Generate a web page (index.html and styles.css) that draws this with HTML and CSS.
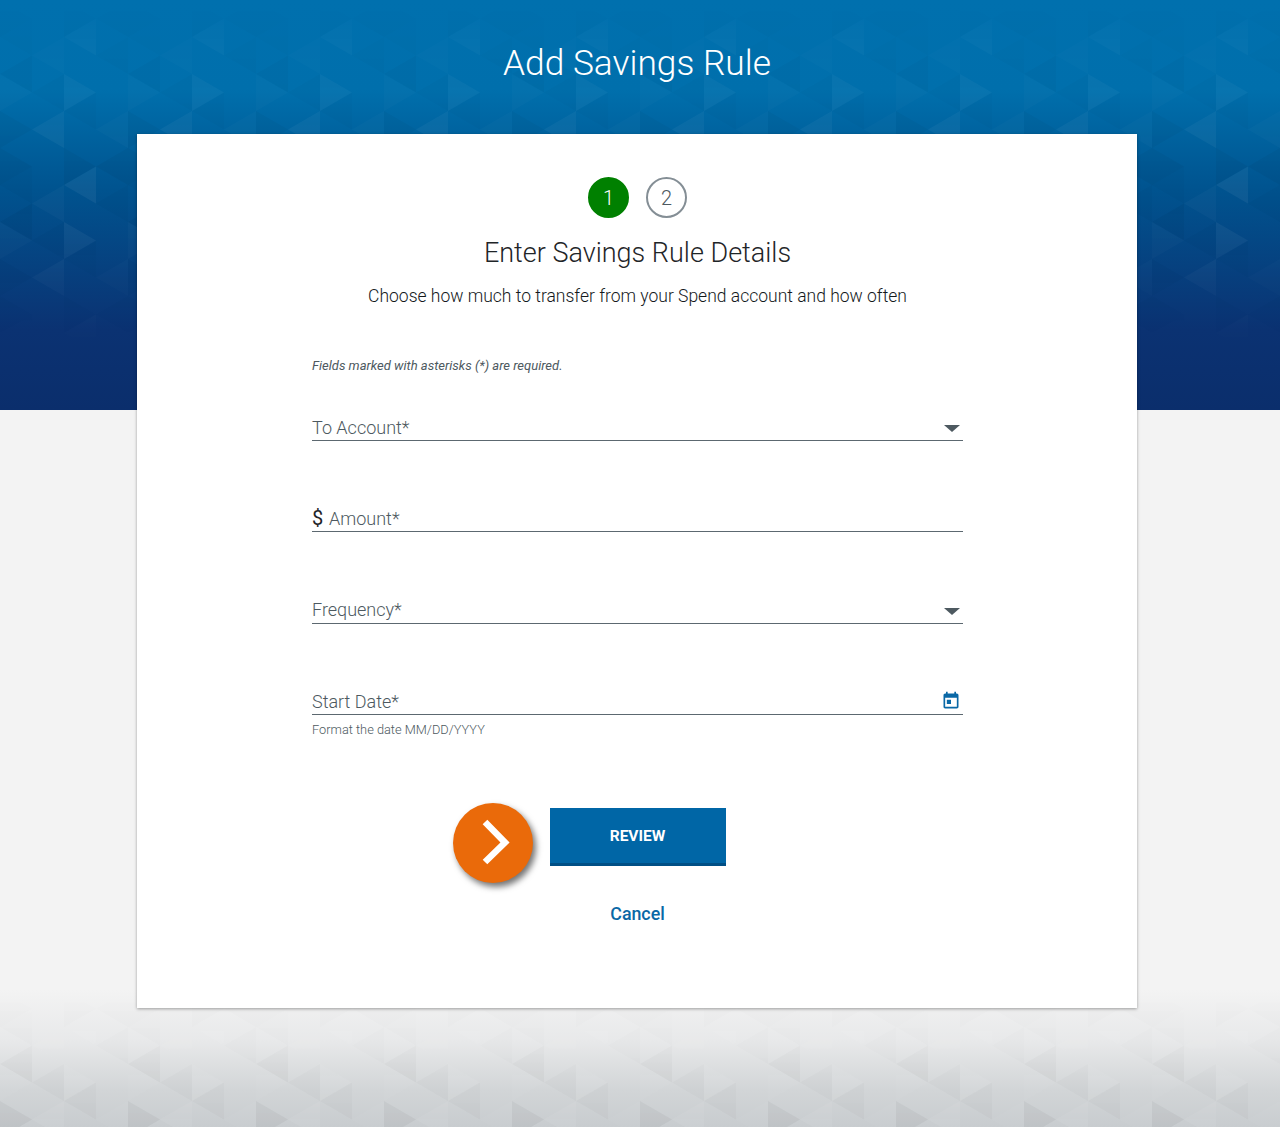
FILE: index.html
```html
<!DOCTYPE html>
<html lang="en">
<head>
  <meta charset="UTF-8">
  <meta name="viewport" content="width=device-width, initial-scale=1.0">
  <title>Add Savings Rule</title>
  <link rel="stylesheet" href="styles.css">
</head>
<body>
  <!-- background bands, the triangle tile is shared by both -->
  <svg class="bg-top" width="100%" height="100%" aria-hidden="true">
    <defs>
      <pattern id="tri" width="128" height="148" patternUnits="userSpaceOnUse">
        <polygon class="dk1" points="0,0 0,37 32,18.5"/>
        <polygon class="dk2" points="32,18.5 32,55.5 0,37"/>
        <polygon class="lt1" points="32,55.5 64,37 64,74"/>
        <polygon class="dk1" points="64,0 64,37 96,18.5"/>
        <polygon class="lt2" points="96,18.5 96,55.5 64,37"/>
        <polygon class="dk2" points="96,55.5 128,37 128,74"/>
        <polygon class="lt1" points="0,74 0,111 32,92.5"/>
        <polygon class="dk1" points="32,55.5 32,92.5 0,74"/>
        <polygon class="dk2" points="32,92.5 64,74 64,111"/>
        <polygon class="lt2" points="64,74 64,111 96,92.5"/>
        <polygon class="dk2" points="96,92.5 96,129.5 64,111"/>
        <polygon class="lt1" points="96,129.5 128,111 128,148"/>
        <polygon class="dk1" points="0,111 0,148 32,129.5"/>
        <polygon class="lt2" points="32,129.5 64,111 64,148"/>
        <polygon class="dk1" points="96,18.5 128,0 128,37"/>
      </pattern>
      <linearGradient id="fadeTopGrad" x1="0" y1="0" x2="0" y2="1">
        <stop offset="0" stop-color="#000"/>
        <stop offset="0.12" stop-color="#777"/>
        <stop offset="0.5" stop-color="#fff"/>
        <stop offset="0.85" stop-color="#000"/>
      </linearGradient>
      <linearGradient id="fadeBottomGrad" x1="0" y1="0" x2="0" y2="1">
        <stop offset="0" stop-color="#000"/>
        <stop offset="0.35" stop-color="#bbb"/>
        <stop offset="1" stop-color="#fff"/>
      </linearGradient>
      <mask id="fadeTop"><rect width="100%" height="100%" fill="url(#fadeTopGrad)"/></mask>
      <mask id="fadeBottom"><rect width="100%" height="100%" fill="url(#fadeBottomGrad)"/></mask>
    </defs>
    <rect class="tri-fill" width="100%" height="100%" fill="url(#tri)" mask="url(#fadeTop)"/>
  </svg>
  <svg class="bg-bottom" width="100%" height="100%" aria-hidden="true">
    <rect class="tri-fill" width="100%" height="100%" fill="url(#tri)" mask="url(#fadeBottom)"/>
  </svg>

  <div class="page">
    <h1 class="page-title">Add Savings Rule</h1>

    <div class="card">
      <div class="steps">
        <span class="step active">1</span>
        <span class="step">2</span>
      </div>
      <h2 class="card-title">Enter Savings Rule Details</h2>
      <p class="card-sub">Choose how much to transfer from your Spend account and how often</p>

      <form class="rule-form">
        <p class="required-note">Fields marked with asterisks (*) are required.</p>

        <div class="field">
          <span class="field-label">To Account*</span>
          <span class="caret"></span>
        </div>

        <div class="field">
          <span class="currency">$</span>
          <span class="field-label">Amount*</span>
        </div>

        <div class="field">
          <span class="field-label">Frequency*</span>
          <span class="caret"></span>
        </div>

        <div class="field">
          <span class="field-label">Start Date*</span>
          <svg class="cal-icon" width="20" height="20" viewBox="0 0 24 24" fill="#0a68a6">
            <path d="M7 10.5h5v5H7zM16 1v2H8V1H6v2H5c-1.11 0-2 .9-2 2v14c0 1.1.89 2 2 2h14c1.1 0 2-.9 2-2V5c0-1.1-.9-2-2-2h-1V1h-2zm3 18H5V8h14v11z"/>
          </svg>
        </div>
        <p class="field-hint">Format the date MM/DD/YYYY</p>

        <div class="actions">
          <button class="btn-review" type="button">
            <span class="go-badge">
              <svg width="80" height="80" viewBox="0 0 80 80" fill="none" stroke="#fff" stroke-width="6.5">
                <polyline points="32,19 52,39.5 32,59"/>
              </svg>
            </span>
            REVIEW
          </button>
          <a class="cancel-link" href="#">Cancel</a>
        </div>
      </form>
    </div>
  </div>
</body>
</html>
```

FILE: styles.css
```css
* {
  box-sizing: border-box;
}

html, body {
  height: 100%;
}

body {
  margin: 0;
  min-height: 1127px;
  position: relative;
  overflow: hidden;
  font-family: 'Roboto', sans-serif;
  font-weight: 400;
  color: #1f2528;
  background: #f3f3f3;
}

.dk1 { fill: #000; fill-opacity: 0.09; }
.dk2 { fill: #000; fill-opacity: 0.05; }
.lt1 { fill: #fff; fill-opacity: 0.06; }
.lt2 { fill: #fff; fill-opacity: 0.12; }

.bg-top, .bg-bottom {
  position: absolute;
  left: 0;
  width: 100%;
}

.bg-top {
  top: 0;
  height: 410px;
  background: linear-gradient(#0070ae 0, #006fac 90px, #00538f 190px, #0b3272 330px, #0b2e6c 410px);
}

.bg-top .tri-fill {
  opacity: 0.45;
}

.bg-bottom {
  bottom: 0;
  height: 137px;
  background: linear-gradient(#f3f3f3 0, #e8e9ea 50px, #d2d5d7 100px, #c8cccf 137px);
}

.bg-bottom .tri-fill {
  opacity: 0.7;
}

.page {
  position: relative;
  padding-left: 137px;
}

.page-title {
  width: 1000px;
  margin: 0;
  height: 134px;
  padding-top: 42px;
  text-align: center;
  font-size: 35.3px;
  line-height: 42px;
  font-weight: 300;
  color: #fff;
}

.card {
  width: 1000px;
  height: 874px;
  padding: 43px 174px 0 175px;
  background: #fff;
  box-shadow: 0 1px 3px rgba(0, 0, 0, 0.35);
}

.steps {
  display: flex;
  justify-content: center;
  gap: 17px;
}

.step {
  width: 41px;
  height: 41px;
  border: 2px solid #848e95;
  border-radius: 50%;
  display: flex;
  align-items: center;
  justify-content: center;
  font-size: 20px;
  font-weight: 300;
  color: #4d5960;
}

.step.active {
  background: #008000;
  border-color: #008000;
  color: #fff;
}

.card-title {
  margin: 18px 0 0;
  text-align: center;
  font-size: 27px;
  line-height: 34px;
  font-weight: 300;
  color: #1f2528;
}

.card-sub {
  margin: 14px 0 0;
  text-align: center;
  font-size: 17.5px;
  line-height: 24px;
  font-weight: 300;
  color: #14191c;
}

.required-note {
  margin: 49px 0 0;
  font-size: 13px;
  line-height: 18px;
  font-style: italic;
  color: #4d5960;
}

.field {
  height: 28px;
  margin-top: 63.33px;
  display: flex;
  align-items: center;
  border-bottom: 1px solid #5c6870;
  font-size: 18px;
  font-weight: 300;
  color: #4d5960;
}

.required-note + .field {
  margin-top: 38px;
}

.field-label {
  flex: 1;
  padding-top: 1.4px;
}

.currency {
  width: 17px;
  font-size: 20px;
  font-weight: 400;
  color: #1f2528;
}

.caret {
  width: 0;
  height: 0;
  margin: 4px 3px 0 0;
  border-left: 8px solid transparent;
  border-right: 8px solid transparent;
  border-top: 7px solid #4d5960;
}

.cal-icon {
  margin: 2px 2px 0 0;
}

.field-hint {
  margin: 6px 0 0;
  font-size: 12.8px;
  line-height: 17px;
  font-weight: 300;
  color: #4d5960;
}

.actions {
  margin-top: 70px;
  display: flex;
  flex-direction: column;
  align-items: center;
}

.btn-review {
  position: relative;
  width: 176px;
  height: 58px;
  padding: 2px 0 0;
  border: none;
  border-bottom: 3px solid #004f85;
  background: #0066a6;
  color: #fff;
  font-family: inherit;
  font-size: 15.5px;
  font-weight: 700;
}

.go-badge {
  position: absolute;
  left: -97px;
  top: -5px;
  width: 80px;
  height: 80px;
  border-radius: 50%;
  background: #ea6a0a;
  box-shadow: 3px 4px 6px rgba(0, 0, 0, 0.55);
}

.go-badge svg {
  display: block;
}

.cancel-link {
  margin-top: 37px;
  font-size: 17.8px;
  font-weight: 500;
  color: #0a68a6;
  text-decoration: none;
}
```
